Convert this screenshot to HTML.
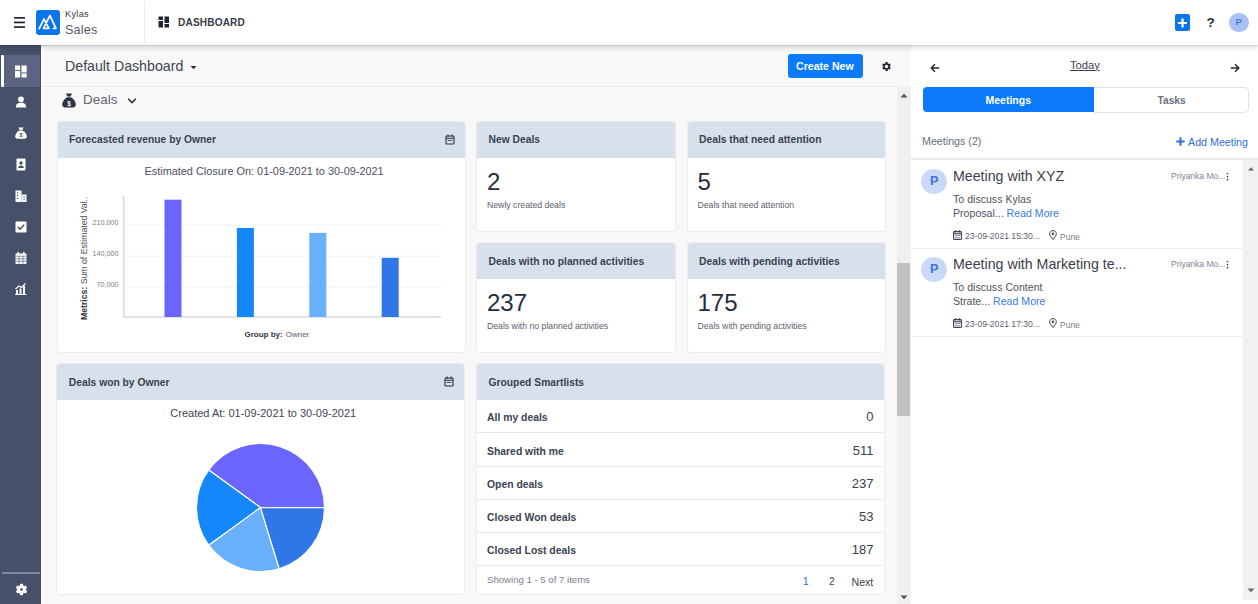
<!DOCTYPE html>
<html><head><meta charset="utf-8">
<style>
*{box-sizing:border-box;margin:0;padding:0}
html,body{width:1258px;height:604px;overflow:hidden;background:#f8f8f9;font-family:"Liberation Sans",sans-serif;color:#2b3445}
.abs{position:absolute}
#hdr{position:absolute;left:0;top:0;width:1258px;height:45px;background:#fff;box-shadow:0 1px 1px rgba(0,0,10,0.08),0 2px 6px rgba(0,0,10,0.17);z-index:5}
#side{position:absolute;left:0;top:45px;width:41px;height:559px;background:#465169;z-index:4}
#main{position:absolute;left:41px;top:45px;width:856px;height:559px;background:#f8f8f9}
#vscroll{position:absolute;left:896.8px;top:87.4px;width:14.2px;height:516.6px;background:#f0f0f0}
#right{position:absolute;left:911px;top:45px;width:347px;height:559px;background:#fff}
.card{position:absolute;background:#fff;border-radius:3px;box-shadow:0 0 0 1px #e9ecf1;overflow:hidden}
.ch{position:absolute;left:0;top:0;right:0;height:36px;background:#d8e1eb}
.ct{position:absolute;left:11.5px;top:12.5px;font-size:10.3px;font-weight:700;color:#3a4250;white-space:nowrap}
.big{position:absolute;left:10px;font-size:24px;color:#262e3d}
.sub{position:absolute;left:10px;font-size:8.7px;color:#5b616d;white-space:nowrap}
</style></head>
<body>
<div id="hdr">
 <svg class="abs" style="left:14px;top:16px" width="12" height="12" viewBox="0 0 12 12"><rect x="0" y="1" width="11" height="1.7" fill="#1f2633"/><rect x="0" y="5.6" width="11" height="1.7" fill="#1f2633"/><rect x="0" y="10.2" width="11" height="1.7" fill="#1f2633"/></svg>
 <div class="abs" style="left:35.6px;top:10.2px;width:24.2px;height:24.8px;background:#0d75ec;border-radius:3px"></div>
 <svg class="abs" style="left:35.6px;top:10.2px" width="24" height="25" viewBox="0 0 24 25"><path d="M3.2 18.6 L8 9 L12.9 18.3 L7.5 18.3 L13.9 5.6 L20 18.3 L17.4 18.3" stroke="#fff" stroke-width="1.7" fill="none" stroke-linejoin="round" stroke-linecap="round"/></svg>
 <div class="abs" style="left:65px;top:8.8px;font-size:9.2px;color:#333a45;letter-spacing:0.3px">Kylas</div>
 <div class="abs" style="left:65px;top:22.8px;font-size:12.6px;color:#555b66;letter-spacing:0.2px">Sales</div>
 <div class="abs" style="left:144px;top:2px;width:1px;height:41px;background:#ebedf0"></div>
 <svg class="abs" style="left:158px;top:16px" width="12" height="12" viewBox="0 0 12 12"><rect x="0.5" y="0.5" width="4.5" height="3.5" fill="#1f2633"/><rect x="0.5" y="5" width="4.5" height="6.5" fill="#1f2633"/><rect x="6.5" y="0.5" width="4.5" height="6.5" fill="#1f2633"/><rect x="6.5" y="8" width="4.5" height="3.5" fill="#1f2633"/></svg>
 <div class="abs" style="left:178px;top:16.6px;font-size:10.1px;font-weight:700;color:#363e4c;letter-spacing:0.15px">DASHBOARD</div>
 <div class="abs" style="left:1175.2px;top:14.4px;width:15px;height:16.4px;background:#0d75ec;border-radius:2px"></div>
 <svg class="abs" style="left:1175.2px;top:14.6px" width="15" height="16" viewBox="0 0 15 16"><path d="M7.5 3.5 V12.5 M3 8 H12" stroke="#fff" stroke-width="2.2"/></svg>
 <div class="abs" style="left:1206.5px;top:14.5px;font-size:13.6px;font-weight:700;color:#2a2f38">?</div>
 <div class="abs" style="left:1229.2px;top:12.6px;width:19.5px;height:19.5px;border-radius:50%;background:#a8c0f3"></div>
 <div class="abs" style="left:1235.6px;top:16.4px;font-size:9.6px;font-weight:700;color:#4a7fe0">P</div>
</div>
<div id="side">
 <div class="abs" style="left:4px;top:10px;width:36px;height:31.5px;background:#5b6480"></div>
 <div class="abs" style="left:1px;top:10px;width:3px;height:31.5px;background:#fff;border-radius:1px"></div>
 <svg class="abs" style="left:15px;top:20px" width="12" height="13" viewBox="0 0 12 13"><rect x="0" y="0.5" width="5.2" height="4.5" fill="#fff"/><rect x="0" y="6" width="5.2" height="6.5" fill="#fff"/><rect x="6.5" y="0.5" width="5.2" height="7" fill="#fff"/><rect x="6.5" y="8.5" width="5.2" height="4" fill="#fff"/></svg>
 <svg class="abs" style="left:15px;top:51px" width="12" height="12" viewBox="0 0 12 12"><circle cx="6" cy="3.3" r="2.9" fill="#fff"/><path d="M0.8 11.5 C0.8 7.8 3 6.8 6 6.8 C9 6.8 11.2 7.8 11.2 11.5 Z" fill="#fff"/></svg>
 <svg class="abs" style="left:15px;top:82px" width="12" height="12" viewBox="0 0 12 12"><path d="M3.5 0.5 H8.5 L7.3 3 H4.7 Z" fill="#fff"/><path d="M4.5 3.5 H7.5 C10 4.5 11.8 7.5 11.8 9.5 C11.8 11 10.5 11.8 9 11.8 H3 C1.5 11.8 0.2 11 0.2 9.5 C0.2 7.5 2 4.5 4.5 3.5 Z" fill="#fff"/><text x="6" y="10.3" font-size="5.5" text-anchor="middle" fill="#465169" font-family="Liberation Sans" font-weight="700">$</text></svg>
 <svg class="abs" style="left:16px;top:113px" width="10" height="13" viewBox="0 0 10 13"><rect x="0.5" y="0.5" width="9" height="12" rx="1" fill="#fff"/><circle cx="5" cy="5" r="1.7" fill="#465169"/><path d="M2.2 10 C2.2 8 3.5 7.4 5 7.4 C6.5 7.4 7.8 8 7.8 10 Z" fill="#465169"/></svg>
 <svg class="abs" style="left:15px;top:145px" width="12" height="12" viewBox="0 0 12 12"><rect x="0.5" y="0.5" width="6" height="11.5" fill="#fff"/><rect x="6.5" y="4.5" width="5" height="7.5" fill="#fff"/><rect x="2" y="2.2" width="1.2" height="1.2" fill="#465169"/><rect x="2" y="5" width="1.2" height="1.2" fill="#465169"/><rect x="2" y="7.8" width="1.2" height="1.2" fill="#465169"/><rect x="8.5" y="6.5" width="1.2" height="1.2" fill="#465169"/><rect x="8.5" y="9" width="1.2" height="1.2" fill="#465169"/></svg>
 <svg class="abs" style="left:15px;top:176px" width="12" height="12" viewBox="0 0 12 12"><rect x="0.5" y="0.5" width="11" height="11" rx="1.2" fill="#fff"/><path d="M2.8 6 L5 8.2 L9.2 3.8" stroke="#465169" stroke-width="1.6" fill="none"/></svg>
 <svg class="abs" style="left:15px;top:207px" width="12" height="12" viewBox="0 0 12 12"><rect x="0.5" y="1.5" width="11" height="10.5" rx="1" fill="#fff"/><rect x="2.5" y="0" width="1.5" height="3" fill="#fff"/><rect x="8" y="0" width="1.5" height="3" fill="#fff"/><path d="M0.5 4.2 H11.5 M0.5 6.8 H11.5 M0.5 9.3 H11.5 M4 4 V12 M8 4 V12" stroke="#465169" stroke-width="0.6"/></svg>
 <svg class="abs" style="left:15px;top:238px" width="12" height="12" viewBox="0 0 12 12"><rect x="1" y="7" width="2" height="4.5" fill="#fff"/><rect x="4.5" y="5.5" width="2" height="6" fill="#fff"/><rect x="8" y="3" width="2" height="8.5" fill="#fff"/><path d="M0.5 6 L4 3 L6.5 4.5 L10.5 0.5" stroke="#fff" stroke-width="1.2" fill="none"/><rect x="0" y="11" width="11.5" height="1" fill="#fff"/></svg>
 <div class="abs" style="left:2px;top:527px;width:38px;height:1.5px;background:#7e879e"></div>
 <svg class="abs" style="left:14.8px;top:538px" width="13" height="13" viewBox="0 0 13 13"><g fill="#fff"><circle cx="6.5" cy="6.5" r="4.3"/><rect x="4.9" y="0.8" width="3.2" height="11.4" rx="0.8"/><rect x="4.9" y="0.8" width="3.2" height="11.4" rx="0.8" transform="rotate(60 6.5 6.5)"/><rect x="4.9" y="0.8" width="3.2" height="11.4" rx="0.8" transform="rotate(120 6.5 6.5)"/></g><circle cx="6.5" cy="6.5" r="1.3" fill="#465169"/></svg>
</div>
<div id="main"></div>
<div class="abs" style="left:41px;top:45px;width:3px;height:559px;background:#fdfdfe"></div>
<!-- top bar -->
<div class="abs" style="left:41px;top:85.8px;width:856px;height:1.6px;background:#e6e8ed"></div>
<div class="abs" style="left:65px;top:57.5px;font-size:14.2px;color:#40454f;white-space:nowrap">Default Dashboard</div>
<svg class="abs" style="left:190px;top:65px" width="7" height="5" viewBox="0 0 7 5"><path d="M0.5 1 H6.5 L3.5 4.2 Z" fill="#2a303b"/></svg>
<div class="abs" style="left:787.5px;top:54px;width:75px;height:24px;background:#0b7bfa;border-radius:3px"></div>
<div class="abs" style="left:796px;top:60px;font-size:10.6px;font-weight:700;color:#fff;white-space:nowrap">Create New</div>
<svg class="abs" style="left:881px;top:61px" width="11" height="11" viewBox="0 0 24 24"><path fill="#1f2430" d="M19.14 12.94c.04-.3.06-.61.06-.94 0-.32-.02-.64-.07-.94l2.03-1.58a.49.49 0 0 0 .12-.61l-1.92-3.32a.488.488 0 0 0-.59-.22l-2.39.96c-.5-.38-1.030-.7-1.62-.94l-.36-2.54a.484.484 0 0 0-.48-.41h-3.84c-.24 0-.43.17-.47.41l-.36 2.54c-.59.24-1.13.57-1.62.94l-2.39-.96c-.22-.08-.47 0-.59.22L2.74 8.87c-.12.21-.08.47.12.61l2.03 1.58c-.05.3-.09.63-.09.94s.02.64.07.94l-2.03 1.58a.49.49 0 0 0-.12.61l1.92 3.32c.12.22.37.29.59.22l2.39-.96c.5.38 1.03.7 1.62.94l.36 2.54c.05.24.24.41.48.41h3.84c.24 0 .44-.17.47-.41l.36-2.54c.59-.24 1.13-.56 1.62-.94l2.39.96c.22.08.47 0 .59-.22l1.92-3.32c.12-.22.07-.47-.12-.61l-2.01-1.58zM12 15.6c-1.98 0-3.6-1.62-3.6-3.6s1.62-3.6 3.6-3.6 3.6 1.62 3.6 3.6-1.62 3.6-3.6 3.6z"/></svg>
<!-- deals row -->
<svg class="abs" style="left:62px;top:92.7px" width="14" height="15" viewBox="0 0 14 15"><path d="M4 0.5 H10 L8.6 3.6 H5.4 Z" fill="#2b3344"/><path d="M5.3 4.2 H8.7 C11.6 5.4 13.8 9 13.8 11.5 C13.8 13.5 12.3 14.6 10.5 14.6 H3.5 C1.7 14.6 0.2 13.5 0.2 11.5 C0.2 9 2.4 5.4 5.3 4.2 Z" fill="#2b3344"/><text x="7" y="12.6" font-size="6.5" text-anchor="middle" fill="#fff" font-family="Liberation Sans" font-weight="700">$</text></svg>
<div class="abs" style="left:83px;top:91.5px;font-size:13.5px;color:#626771;white-space:nowrap">Deals</div>
<svg class="abs" style="left:127px;top:96.8px" width="10" height="8" viewBox="0 0 10 8"><path d="M1.2 1.8 L5 5.6 L8.8 1.8" stroke="#2b3344" stroke-width="1.6" fill="none"/></svg>
<!-- scrollbar -->
<div id="vscroll"></div>
<svg class="abs" style="left:900px;top:93px" width="8" height="5" viewBox="0 0 8 5"><path d="M0.5 4.5 L4 0.8 L7.5 4.5 Z" fill="#505050"/></svg>
<svg class="abs" style="left:900px;top:595px" width="8" height="5" viewBox="0 0 8 5"><path d="M0.5 0.5 L4 4.2 L7.5 0.5 Z" fill="#505050"/></svg>
<div class="abs" style="left:897.2px;top:262.5px;width:12.6px;height:153px;background:#c1c1c1"></div>

<!-- card 1 forecast -->
<div class="card" style="left:57.5px;top:121.5px;width:407.5px;height:230.2px">
 <div class="ch"></div>
 <div class="ct">Forecasted revenue by Owner</div>
 <svg class="abs" style="left:387px;top:12.3px" width="10" height="11" viewBox="0 0 10 11"><rect x="1" y="2" width="8" height="8" rx="0.8" fill="none" stroke="#2a303b" stroke-width="1.1"/><path d="M1 4.3 H9" stroke="#2a303b" stroke-width="1.1"/><path d="M3 0.6 V2.8 M7 0.6 V2.8" stroke="#2a303b" stroke-width="1.1"/><path d="M2.5 6.4 H7.5" stroke="#4a5260" stroke-width="1"/></svg>
 <div class="abs" style="left:87px;top:43.1px;font-size:10.9px;color:#4b5161;white-space:nowrap">Estimated Closure On: 01-09-2021 to 30-09-2021</div>
 <svg class="abs" style="left:0;top:36px" width="407" height="195" viewBox="0 0 407 195">
  <g transform="translate(-57.5,-157.5)">
   <path d="M124 224.7 H440.7 M124 255.5 H440.7 M124 286.3 H440.7" stroke="#f1f2f5" stroke-width="1"/>
   <path d="M123.3 195.5 V316.5 H440.7" stroke="#c5cad4" stroke-width="1.1" fill="none"/>
   <rect x="164" y="199.2" width="17" height="117.3" fill="#6b66fb"/>
   <rect x="236.4" y="227.5" width="17" height="89" fill="#1487fb"/>
   <rect x="308.8" y="232.4" width="17" height="84.1" fill="#68b0fc"/>
   <rect x="381.2" y="257.3" width="17" height="59.2" fill="#2f76e6"/>
   <g font-family="Liberation Sans" font-size="7.2" fill="#777c86" text-anchor="end">
    <text x="118" y="224.7">210,000</text><text x="118" y="255.5">140,000</text><text x="118" y="286.3">70,000</text>
   </g>
   <text transform="translate(86.6,319.5) rotate(-90)" font-family="Liberation Sans" font-size="8.7" fill="#4a505b"><tspan font-weight="700" fill="#2f3540">Metrics:</tspan> Sum of Estimated Val..</text>
   <text x="244" y="336.8" font-family="Liberation Sans" font-size="8" fill="#2f3542"><tspan font-weight="700">Group by:</tspan><tspan dx="3" fill="#5a606c">Owner</tspan></text>
  </g>
 </svg>
</div>
<!-- stat cards -->
<div class="card" style="left:477px;top:121.5px;width:197.5px;height:109px">
 <div class="ch"></div><div class="ct">New Deals</div>
 <div class="big" style="top:46px">2</div>
 <div class="sub" style="top:78px">Newly created deals</div>
</div>
<div class="card" style="left:687.5px;top:121.5px;width:197.5px;height:109px">
 <div class="ch"></div><div class="ct">Deals that need attention</div>
 <div class="big" style="top:46px">5</div>
 <div class="sub" style="top:78px">Deals that need attention</div>
</div>
<div class="card" style="left:477px;top:243px;width:197.5px;height:109px">
 <div class="ch"></div><div class="ct">Deals with no planned activities</div>
 <div class="big" style="top:46px">237</div>
 <div class="sub" style="top:78px">Deals with no planned activities</div>
</div>
<div class="card" style="left:687.5px;top:243px;width:197.5px;height:109px">
 <div class="ch"></div><div class="ct">Deals with pending activities</div>
 <div class="big" style="top:46px">175</div>
 <div class="sub" style="top:78px">Deals with pending activities</div>
</div>
<!-- card won -->
<div class="card" style="left:57.3px;top:363.8px;width:407.2px;height:230.4px">
 <div class="ch"></div><div class="ct" style="top:13.5px">Deals won by Owner</div>
 <svg class="abs" style="left:387px;top:12.3px" width="10" height="11" viewBox="0 0 10 11"><rect x="1" y="2" width="8" height="8" rx="0.8" fill="none" stroke="#2a303b" stroke-width="1.1"/><path d="M1 4.3 H9" stroke="#2a303b" stroke-width="1.1"/><path d="M3 0.6 V2.8 M7 0.6 V2.8" stroke="#2a303b" stroke-width="1.1"/><path d="M2.5 6.4 H7.5" stroke="#4a5260" stroke-width="1"/></svg>
 <div class="abs" style="left:113px;top:43px;font-size:11px;color:#3f4553;white-space:nowrap">Created At: 01-09-2021 to 30-09-2021</div>
 <svg class="abs" style="left:0;top:36px" width="407" height="195" viewBox="0 0 407 195">
  <g transform="translate(-57.5,-399.9)">
   <path d="M261 507.5 L325.00 507.50 A64 64 0 0 0 209.22 469.88 Z" fill="#6b66fb" stroke="#fff" stroke-width="1.2" stroke-linejoin="round"/><path d="M261 507.5 L209.22 469.88 A64 64 0 0 0 209.22 545.12 Z" fill="#1487fb" stroke="#fff" stroke-width="1.2" stroke-linejoin="round"/><path d="M261 507.5 L209.22 545.12 A64 64 0 0 0 279.71 568.70 Z" fill="#68b0fc" stroke="#fff" stroke-width="1.2" stroke-linejoin="round"/><path d="M261 507.5 L279.71 568.70 A64 64 0 0 0 325.00 507.50 Z" fill="#2f76e6" stroke="#fff" stroke-width="1.2" stroke-linejoin="round"/>
  </g>
 </svg>
</div>
<!-- smartlists -->
<div class="card" style="left:477px;top:363.8px;width:406.5px;height:230.4px">
 <div class="ch"></div><div class="ct" style="top:13.5px">Grouped Smartlists</div>
 <div class="abs" style="left:10px;top:48.7px;font-size:10.4px;font-weight:700;color:#3c4351;white-space:nowrap">All my deals</div><div class="abs" style="right:10px;top:45.7px;font-size:13px;color:#3a404c">0</div><div class="abs" style="left:0;right:0;top:68.7px;height:1px;background:#e6e9ef"></div>
 <div class="abs" style="left:10px;top:81.9px;font-size:10.4px;font-weight:700;color:#3c4351;white-space:nowrap">Shared with me</div><div class="abs" style="right:10px;top:78.9px;font-size:13px;color:#3a404c">511</div><div class="abs" style="left:0;right:0;top:101.9px;height:1px;background:#e6e9ef"></div>
 <div class="abs" style="left:10px;top:115.1px;font-size:10.4px;font-weight:700;color:#3c4351;white-space:nowrap">Open deals</div><div class="abs" style="right:10px;top:112.1px;font-size:13px;color:#3a404c">237</div><div class="abs" style="left:0;right:0;top:135.1px;height:1px;background:#e6e9ef"></div>
 <div class="abs" style="left:10px;top:148.3px;font-size:10.4px;font-weight:700;color:#3c4351;white-space:nowrap">Closed Won deals</div><div class="abs" style="right:10px;top:145.3px;font-size:13px;color:#3a404c">53</div><div class="abs" style="left:0;right:0;top:168.3px;height:1px;background:#e6e9ef"></div>
 <div class="abs" style="left:10px;top:181.5px;font-size:10.4px;font-weight:700;color:#3c4351;white-space:nowrap">Closed Lost deals</div><div class="abs" style="right:10px;top:178.5px;font-size:13px;color:#3a404c">187</div><div class="abs" style="left:0;right:0;top:201.5px;height:1px;background:#e6e9ef"></div>
 <div class="abs" style="left:10px;top:210.5px;font-size:9.6px;color:#7a808c;white-space:nowrap">Showing 1 - 5 of 7 items</div><div class="abs" style="left:326px;top:212px;font-size:10px;color:#2f6fd6">1</div><div class="abs" style="left:352px;top:212px;font-size:10px;color:#3a404c">2</div><div class="abs" style="left:374.5px;top:212px;font-size:10.6px;color:#3a404c">Next</div>
</div>

<div id="right">
</div>
<svg class="abs" style="left:930px;top:63px" width="10" height="10" viewBox="0 0 10 10"><path d="M9.3 5 H1.5 M5 1.3 L1.3 5 L5 8.7" stroke="#262b35" stroke-width="1.5" fill="none"/></svg>
<div class="abs" style="left:1070px;top:58.5px;font-size:11.2px;color:#3b404b;text-decoration:underline;white-space:nowrap">Today</div>
<svg class="abs" style="left:1230px;top:63px" width="10" height="10" viewBox="0 0 10 10"><path d="M0.7 5 H8.5 M5 1.3 L8.7 5 L5 8.7" stroke="#262b35" stroke-width="1.5" fill="none"/></svg>
<div class="abs" style="left:922.5px;top:86.5px;width:171.5px;height:25px;background:#0b7bfa;border-radius:4px 0 0 4px"></div>
<div class="abs" style="left:1093.5px;top:86.5px;width:155.5px;height:26px;border:1px solid #dfe3e9;border-left:none;border-radius:0 5px 5px 0"></div>
<div class="abs" style="left:985.5px;top:94px;font-size:10.5px;font-weight:700;color:#fff">Meetings</div>
<div class="abs" style="left:1157.5px;top:94.5px;font-size:10.2px;font-weight:700;color:#6a707b">Tasks</div>
<div class="abs" style="left:922px;top:135px;font-size:10.7px;color:#676d78;white-space:nowrap">Meetings (2)</div>
<svg class="abs" style="left:1176px;top:137px" width="9" height="9" viewBox="0 0 9 9"><path d="M4.5 0.3 V8.7 M0.3 4.5 H8.7" stroke="#2f6fd6" stroke-width="2"/></svg>
<div class="abs" style="left:1188px;top:135.5px;font-size:10.7px;color:#2f6fd6;white-space:nowrap">Add Meeting</div>
<div class="abs" style="left:911px;top:158px;width:347px;height:1.5px;background:#e8eaee"></div>
<div class="abs" style="left:1243px;top:159.5px;width:15px;height:440.5px;background:#f1f1f1"></div>
<svg class="abs" style="left:1247px;top:165.5px" width="8" height="5" viewBox="0 0 8 5"><path d="M1 4.5 L4 1.2 L7 4.5 Z" fill="#6a6a6a"/></svg>
<svg class="abs" style="left:1247px;top:588.3px" width="8" height="5" viewBox="0 0 8 5"><path d="M0.5 0.5 L4 4.2 L7.5 0.5 Z" fill="#6a6a6a"/></svg>
<div class="abs" style="left:921.3px;top:168.5px;width:25.8px;height:25.5px;border-radius:50%;background:#c9d9f6"></div><div class="abs" style="left:930px;top:173.7px;font-size:12.6px;font-weight:700;color:#3b76d8">P</div><div class="abs" style="left:953px;top:167.7px;font-size:14.2px;color:#3b404b;white-space:nowrap">Meeting with XYZ</div><div class="abs" style="left:1171px;top:170.7px;font-size:8.5px;color:#7b8496;white-space:nowrap">Priyanka Mo...</div><svg class="abs" style="left:1226.1px;top:171.5px" width="3" height="9" viewBox="0 0 3 9"><circle cx="1.5" cy="1.5" r="0.85" fill="#3b4252"/><circle cx="1.5" cy="4.6" r="0.85" fill="#3b4252"/><circle cx="1.5" cy="7.7" r="0.85" fill="#3b4252"/></svg><div class="abs" style="left:953px;top:191.7px;font-size:10.6px;color:#4e5460;white-space:nowrap;line-height:14.7px">To discuss Kylas<br>Proposal... <span style="color:#3b7be2">Read More</span></div><svg class="abs" style="left:952.8px;top:229.5px" width="9" height="10" viewBox="0 0 9 10"><rect x="0.6" y="1.6" width="7.8" height="7.8" rx="0.8" fill="none" stroke="#3b4252" stroke-width="1.1"/><path d="M0.6 3.8 H8.4" stroke="#3b4252" stroke-width="1.1"/><path d="M2.5 0.3 V2.4 M6.5 0.3 V2.4" stroke="#3b4252" stroke-width="1.1"/><path d="M2 5.6 H7 M2 7.3 H7" stroke="#6b7280" stroke-width="0.7"/></svg><div class="abs" style="left:965px;top:230.5px;font-size:8.6px;color:#5d636e;white-space:nowrap">23-09-2021 15:30...</div><svg class="abs" style="left:1048.5px;top:230.0px" width="8" height="10" viewBox="0 0 8 10"><path d="M4 9.4 C2 7.2 0.7 5.5 0.7 3.8 C0.7 1.9 2.2 0.6 4 0.6 C5.8 0.6 7.3 1.9 7.3 3.8 C7.3 5.5 6 7.2 4 9.4 Z" fill="none" stroke="#3b4252" stroke-width="1"/><circle cx="4" cy="3.8" r="1.2" fill="#3b4252"/></svg><div class="abs" style="left:1060px;top:231.5px;font-size:8.5px;color:#7a808b;white-space:nowrap">Pune</div><div class="abs" style="left:911px;top:247.5px;width:332px;height:1.5px;background:#eceef2"></div><div class="abs" style="left:921.3px;top:256.5px;width:25.8px;height:25.5px;border-radius:50%;background:#c9d9f6"></div><div class="abs" style="left:930px;top:261.7px;font-size:12.6px;font-weight:700;color:#3b76d8">P</div><div class="abs" style="left:953px;top:255.7px;font-size:14.2px;color:#3b404b;white-space:nowrap">Meeting with Marketing te...</div><div class="abs" style="left:1171px;top:258.7px;font-size:8.5px;color:#7b8496;white-space:nowrap">Priyanka Mo...</div><svg class="abs" style="left:1226.1px;top:259.5px" width="3" height="9" viewBox="0 0 3 9"><circle cx="1.5" cy="1.5" r="0.85" fill="#3b4252"/><circle cx="1.5" cy="4.6" r="0.85" fill="#3b4252"/><circle cx="1.5" cy="7.7" r="0.85" fill="#3b4252"/></svg><div class="abs" style="left:953px;top:279.7px;font-size:10.6px;color:#4e5460;white-space:nowrap;line-height:14.7px">To discuss Content<br>Strate... <span style="color:#3b7be2">Read More</span></div><svg class="abs" style="left:952.8px;top:317.5px" width="9" height="10" viewBox="0 0 9 10"><rect x="0.6" y="1.6" width="7.8" height="7.8" rx="0.8" fill="none" stroke="#3b4252" stroke-width="1.1"/><path d="M0.6 3.8 H8.4" stroke="#3b4252" stroke-width="1.1"/><path d="M2.5 0.3 V2.4 M6.5 0.3 V2.4" stroke="#3b4252" stroke-width="1.1"/><path d="M2 5.6 H7 M2 7.3 H7" stroke="#6b7280" stroke-width="0.7"/></svg><div class="abs" style="left:965px;top:318.5px;font-size:8.6px;color:#5d636e;white-space:nowrap">23-09-2021 17:30...</div><svg class="abs" style="left:1048.5px;top:318.0px" width="8" height="10" viewBox="0 0 8 10"><path d="M4 9.4 C2 7.2 0.7 5.5 0.7 3.8 C0.7 1.9 2.2 0.6 4 0.6 C5.8 0.6 7.3 1.9 7.3 3.8 C7.3 5.5 6 7.2 4 9.4 Z" fill="none" stroke="#3b4252" stroke-width="1"/><circle cx="4" cy="3.8" r="1.2" fill="#3b4252"/></svg><div class="abs" style="left:1060px;top:319.5px;font-size:8.5px;color:#7a808b;white-space:nowrap">Pune</div><div class="abs" style="left:911px;top:335.5px;width:332px;height:1.5px;background:#eceef2"></div>
</body></html>
